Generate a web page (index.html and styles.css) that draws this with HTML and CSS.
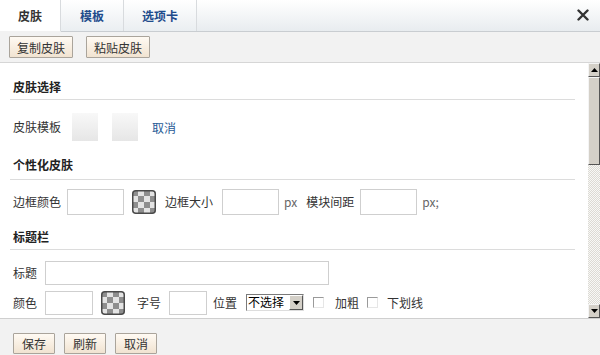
FILE: index.html
```html
<!DOCTYPE html>
<html>
<head>
<meta charset="utf-8">
<link rel="stylesheet" href="styles.css">
</head>
<body>
<div class="dialog">
  <div class="tabs">
    <div class="tab active">皮肤</div>
    <div class="tab">模板</div>
    <div class="tab">选项卡</div>
    <div class="tab-fill"></div>
    <div class="close"><svg width="12" height="12" viewBox="0 0 12 12"><path d="M1.5 1.5 L10.5 10.5 M10.5 1.5 L1.5 10.5" stroke="#333" stroke-width="2.4" stroke-linecap="round"/></svg></div>
  </div>
  <div class="toolbar">
    <button class="btn">复制皮肤</button>
    <button class="btn">粘贴皮肤</button>
  </div>
  <div class="body">
    <div class="content">
      <div class="heading h1">皮肤选择</div>
      <div class="row r1">
        <span class="label">皮肤模板</span>
        <span class="swatch sw1"></span>
        <span class="swatch sw2"></span>
        <a class="link">取消</a>
      </div>
      <div class="heading h2">个性化皮肤</div>
      <div class="row r2">
        <span class="label">边框颜色</span>
        <span class="input w57 m6"></span>
        <span class="picker m8"><svg width="24" height="24" viewBox="0 0 24 24"><defs><pattern id="ck" width="12" height="12" patternUnits="userSpaceOnUse" x="0" y="0"><rect width="12" height="12" fill="#e4e4e4"/><rect width="6" height="6" fill="#8e8e8e"/><rect x="6" y="6" width="6" height="6" fill="#8e8e8e"/></pattern></defs><rect x="0.75" y="0.75" width="22.5" height="22.5" rx="3" fill="url(#ck)" stroke="#4a4a4a" stroke-width="1.5"/></svg></span>
        <span class="label m9">边框大小</span>
        <span class="input w57 m9"></span>
        <span class="unit m5">px</span>
        <span class="label m9">模块间距</span>
        <span class="input w57 m6"></span>
        <span class="unit m5">px;</span>
      </div>
      <div class="heading h3">标题栏</div>
      <div class="row r3">
        <span class="label">标题</span>
        <span class="input w284 m8"></span>
      </div>
      <div class="row r4">
        <span class="label">颜色</span>
        <span class="input w48 m8"></span>
        <span class="picker m8"><svg width="24" height="24" viewBox="0 0 24 24"><rect x="0.75" y="0.75" width="22.5" height="22.5" rx="3" fill="url(#ck)" stroke="#4a4a4a" stroke-width="1.5"/></svg></span>
        <span class="label m12">字号</span>
        <span class="input w38 m8"></span>
        <span class="label m6">位置</span>
        <span class="select m9"><span class="sel-text">不选择</span><span class="sel-btn"><svg width="7" height="4" viewBox="0 0 7 4"><path d="M0 0 H7 L3.5 4 Z" fill="#000"/></svg></span></span>
        <span class="check m9"></span>
        <span class="label m11">加粗</span>
        <span class="check m8"></span>
        <span class="label m9">下划线</span>
      </div>
    </div>
    <div class="scrollbar">
      <div class="sb-btn"><svg width="7" height="4" viewBox="0 0 7 4"><path d="M0 4 H7 L3.5 0 Z" fill="#000"/></svg></div>
      <div class="sb-thumb"></div>
      <div class="sb-track"></div>
      <div class="sb-btn"><svg width="7" height="4" viewBox="0 0 7 4"><path d="M0 0 H7 L3.5 4 Z" fill="#000"/></svg></div>
    </div>
  </div>
  <div class="footer">
    <button class="btn small">保存</button>
    <button class="btn small">刷新</button>
    <button class="btn small">取消</button>
  </div>
</div>
</body>
</html>
```
FILE: styles.css
```css
* { box-sizing: border-box; }
html, body { margin: 0; padding: 0; }
body {
  width: 600px;
  height: 355px;
  overflow: hidden;
  background: #fff;
  font-family: "Noto Sans CJK SC", "Noto Sans", sans-serif;
  font-size: 12px;
  color: #333;
}
.dialog { display: flex; flex-direction: column; height: 355px; }

.tabs {
  display: flex;
  height: 32px;
  border-bottom: 1px solid #c9cdd1;
  background: linear-gradient(#ffffff, #e8ecef);
}
.tab {
  display: flex;
  align-items: center;
  justify-content: center;
  font-weight: bold;
  color: #1e4c8c;
  border-right: 1px solid #d8dbde;
  background: linear-gradient(#ffffff, #eaeef1);
}
.tab:nth-child(1) { width: 61px; }
.tab:nth-child(2) { width: 63px; }
.tab:nth-child(3) { width: 73px; }
.tab.active { background: #fff; color: #333; margin-bottom: -1px; border-bottom: 1px solid #f2f2f2; }
.tab-fill { flex: 1; }
.close { width: 30px; display: flex; align-items: center; justify-content: center; padding-right: 4px; margin-top: -2px; }

.toolbar {
  display: flex;
  align-items: center;
  gap: 13px;
  height: 31px;
  padding-left: 9px;
  background: #f2f2f2;
  border-bottom: 1px solid #d6d6d6;
}
.btn {
  font-family: inherit;
  font-size: 12px;
  color: #333;
  height: 22px;
  width: 64px;
  padding: 0;
  border: 1px solid #aaa49b;
  border-radius: 1px;
  background: linear-gradient(#fffaf3, #f1e3d1);
}
.btn.small { width: 42px; height: 21px; }

.body { display: flex; height: 255px; }
.content { flex: 1; padding: 0 13px 0 10px; overflow: hidden; background: #fff; }
.heading {
  font-weight: bold;
  color: #222;
  line-height: 16px;
  padding-left: 3px;
  border-bottom: 1px solid #dcdcdc;
}
.h1 { padding-top: 16px; padding-bottom: 4px; }
.h2 { padding-top: 7px; padding-bottom: 6px; }
.h3 { padding-top: 5px; padding-bottom: 4px; }

.row { display: flex; align-items: center; padding-left: 3px; white-space: nowrap; }
.r1 { height: 50px; padding-top: 4px; }
.r2 { height: 44px; }
.r3 { padding-top: 10px; height: 36px; }
.r4 { padding-top: 3px; height: 30px; }

.label, .unit { line-height: 16px; }
.unit { color: #666; }
.link { color: #1f5a96; margin-left: 14px; }

.swatch {
  width: 26px; height: 28px;
  background: linear-gradient(#f8f8f8, #e6e6e6);
}
.sw1 { margin-left: 11px; }
.sw2 { margin-left: 14px; }

.input { display: inline-block; height: 26px; border: 1px solid #cfcfcf; background: #fff; }
.r3 .input, .r4 .input { height: 24px; }
.w57 { width: 57px; }
.w48 { width: 48px; }
.w38 { width: 38px; }
.w284 { width: 284px; }
.picker { display: inline-flex; width: 24px; height: 24px; }

.select {
  display: inline-flex;
  width: 58px; height: 17px;
  border: 1px solid #7a7a7a;
  border-right-color: #ddd; border-bottom-color: #ddd;
  background: #fff;
  line-height: 14px;
}
.sel-text { flex: 1; padding-left: 1px; color: #000; }
.sel-btn {
  width: 14px;
  display: flex; align-items: center; justify-content: center;
  background: #d4d0c8;
  border: 1px solid #fff; border-right-color: #555; border-bottom-color: #555;
}
.check {
  width: 11px; height: 11px;
  border: 1px solid #9a9a9a;
  border-right-color: #e6e6e6; border-bottom-color: #e6e6e6;
  background: #fff;
}

.m5 { margin-left: 5px; }
.m6 { margin-left: 6px; }
.m8 { margin-left: 8px; }
.m9 { margin-left: 9px; }
.m11 { margin-left: 11px; }
.m12 { margin-left: 12px; }

.scrollbar { width: 12px; display: flex; flex-direction: column; background: #fff; }
.sb-btn {
  height: 14px;
  display: flex; align-items: center; justify-content: center;
  background: #d4d0c8;
  border: 1px solid #f4f4f4; border-right-color: #555; border-bottom-color: #555;
}
.sb-thumb {
  height: 88px;
  background: #d4d0c8;
  border: 1px solid #f4f4f4; border-right-color: #555; border-bottom-color: #555;
}
.sb-track {
  flex: 1;
  background-color: #eeede9;
  background-image: repeating-conic-gradient(#f8f8f6 0 25%, #dcdad4 0 50%);
  background-size: 2px 2px;
}

.footer {
  flex: 1;
  display: flex;
  align-items: flex-end;
  gap: 9px;
  padding-left: 13px;
  padding-bottom: 1px;
  background: #f2f2f2;
  border-top: 1px solid #cfcfcf;
}
```
